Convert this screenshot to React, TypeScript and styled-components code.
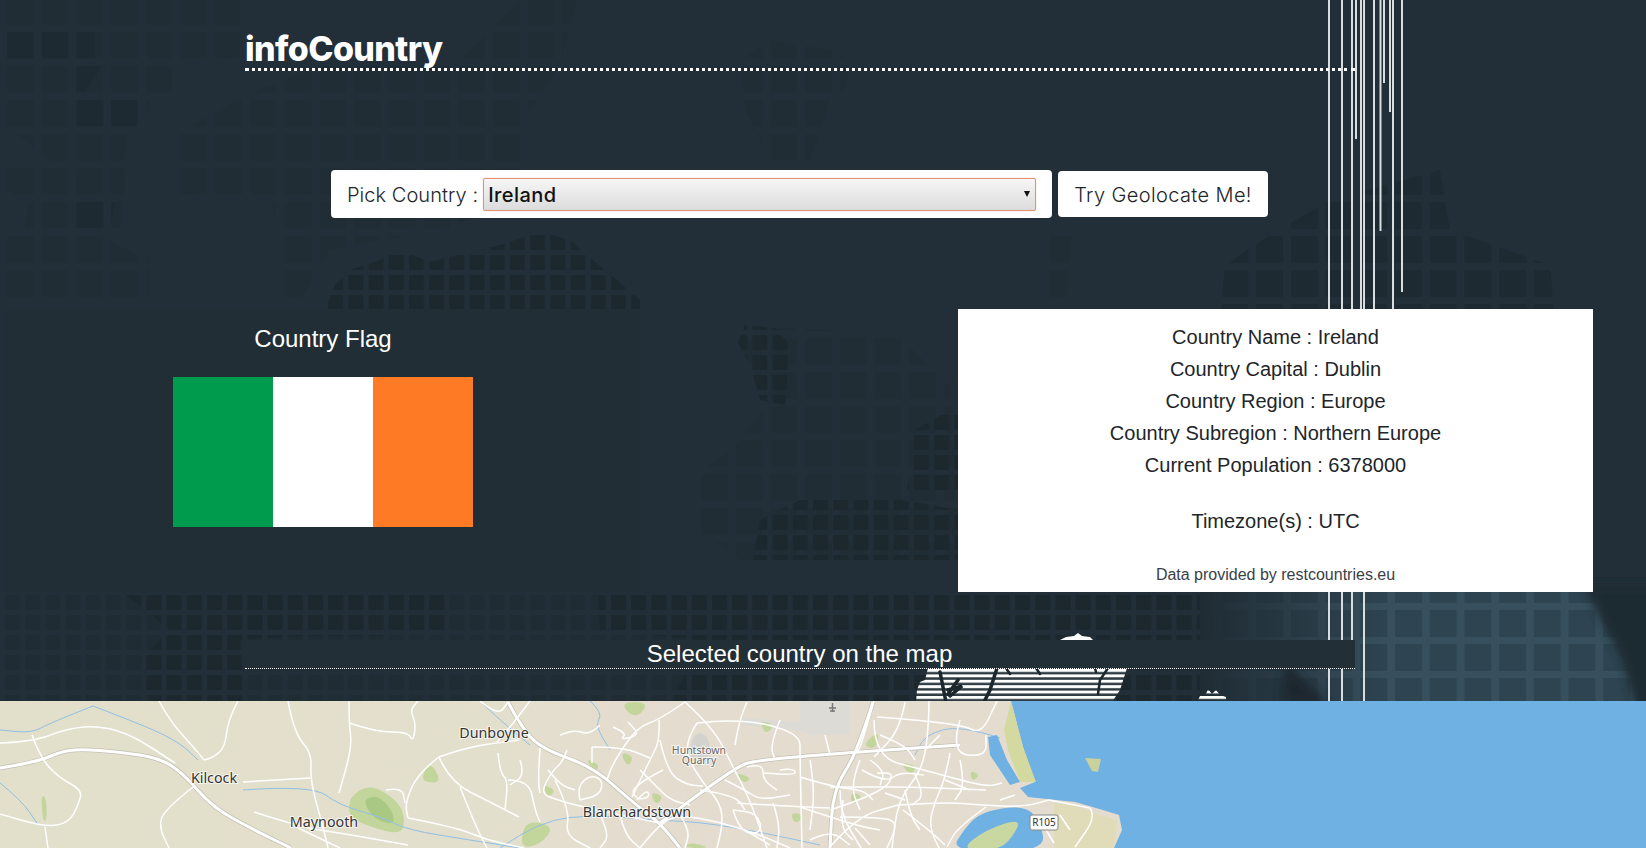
import React from "react";
import styled, { createGlobalStyle } from "styled-components";

const Global = createGlobalStyle`
  html, body { margin: 0; padding: 0; background: #222f38; }
  * { box-sizing: border-box; }
`;

const Page = styled.div`
  position: relative;
  width: 100%;
  height: 848px;
  overflow: hidden;
  background: #222f38;
  font-family: "Liberation Sans", Arial, sans-serif;
`;
const Backdrop = styled.svg`
  position: absolute;
  top: 0;
  left: 0;
  width: 1646px;
  height: 702px;
`;
const Content = styled.main`
  position: relative;
  display: flex;
  flex-direction: column;
`;
const Header = styled.header`
  margin-left: 245px;
  width: 1110px;
  height: 71px;
  padding-top: 27px;
  border-bottom: 3px dotted #fff;
`;
const Title = styled.h1`
  margin: 0;
  font-family: Inter, "Open Sans", sans-serif;
  font-weight: 800;
  font-size: 34px;
  line-height: 44px;
  letter-spacing: -0.6px;
  color: #fff;
`;
const PickerRow = styled.section`
  margin: 99px 0 0 245px;
  padding-left: 86px;
  width: 1110px;
  display: flex;
  align-items: center;
  gap: 6px;
`;
const PickerCard = styled.div`
  width: 721px;
  height: 48px;
  padding: 8px 16px;
  display: flex;
  align-items: center;
  gap: 5px;
  background: #fff;
  border-radius: 4px;
`;
const PickerLabel = styled.label`
  padding-top: 2px;
  font-family: Inter, "Open Sans", sans-serif;
  font-weight: 300;
  font-size: 20px;
  letter-spacing: 0.05px;
  color: #212529;
  white-space: nowrap;
`;
const SelectBox = styled.div`
  position: relative;
  flex: 1;
  height: 33px;
  &::after {
    content: "";
    position: absolute;
    top: 13px;
    right: 6px;
    border-left: 3.5px solid transparent;
    border-right: 3.5px solid transparent;
    border-top: 6px solid #111;
    pointer-events: none;
  }
`;
const CountrySelect = styled.select`
  appearance: none;
  display: block;
  width: 100%;
  height: 33px;
  padding: 1px 0 0 4px;
  font-family: Inter, "Open Sans", sans-serif;
  font-weight: 500;
  font-size: 20px;
  letter-spacing: 0.45px;
  color: #111;
  border: 1px solid #e58f76;
  border-radius: 2px;
  box-shadow: 0 0 1px #e58f76;
  background: linear-gradient(#f6f6f6, #dcdcdc);
`;
const GeoButton = styled.button`
  width: 210px;
  height: 46px;
  padding: 1px 0 0;
  font-family: Inter, "Open Sans", sans-serif;
  font-weight: 300;
  font-size: 20px;
  letter-spacing: 0.38px;
  color: #212529;
  background: #fff;
  border: none;
  border-radius: 4px;
`;
const InfoRow = styled.section`
  margin-top: 91px;
  height: 283px;
  padding: 0 53px 0 5px;
  display: flex;
  justify-content: space-between;
`;
const FlagPanel = styled.div`
  width: 636px;
  padding-top: 15px;
  display: flex;
  flex-direction: column;
  align-items: center;
  background: #212e35;
`;
const FlagTitle = styled.h2`
  margin: 0 0 24px;
  font-weight: 400;
  font-size: 24px;
  line-height: 29px;
  color: #fff;
`;
const Flag = styled.svg`
  display: block;
  width: 300px;
  height: 150px;
`;
const DetailsPanel = styled.div`
  width: 635px;
  padding-top: 12px;
  background: #fff;
  text-align: center;
  color: #212529;
`;
const DetailLine = styled.p<{ $gap?: number }>`
  margin: ${(p) => p.$gap ?? 0}px 0 0;
  font-size: 20px;
  line-height: 32px;
`;
const Credit = styled.p`
  margin: 26px 0 0;
  font-size: 16px;
  line-height: 24px;
  color: #3a4046;
`;
const MapHeading = styled.h2`
  margin: 48px 0 0 245px;
  width: 1110px;
  height: 29px;
  padding-right: 1px;
  font-weight: 400;
  font-size: 24px;
  line-height: 28px;
  text-align: center;
  color: #fff;
  background: #222f36;
  border-bottom: 1px dotted #fff;
`;
const MapFrame = styled.svg`
  display: block;
  margin-top: 32px;
  width: 1646px;
  height: 147px;
`;
const Town = styled.text<{ $size?: number; $ink?: string }>`
  font-family: "Noto Sans", "Open Sans", sans-serif;
  font-size: ${(p) => p.$size ?? 14.3}px;
  fill: ${(p) => p.$ink ?? "#333"};
  stroke: rgba(255, 255, 255, 0.75);
  stroke-width: 2px;
  paint-order: stroke;
  text-anchor: middle;
`;

const faintLand = [
  "5,0 240,0 240,58 200,60 172,62 172,92 152,98 137,126 126,133 125,195 60,195 50,160 5,126",
  "5,167 125,167 120,228 25,228 28,202 5,190",
  "5,235 100,235 150,262 150,297 5,297",
  "178,133 240,98 330,60 460,60 520,0 577,0 560,65 520,125 530,195 450,228 330,250 300,300 283,300 283,240 270,200 180,194",
  "738,343 773,327 897,333 950,387 958,520 960,560 740,560 700,533 700,473 740,440 770,400",
  "1050,235 1072,235 1066,300 1050,300",
  "741,60 770,40 830,50 850,60 846,87 830,100 810,160 770,160 745,110",
];
const darkerLand = [
  "7,32 95,32 95,58 7,58",
  "74,65 101,65 85,92 74,92",
  "74,98 137,98 137,126 74,126",
  "74,202 115,202 110,228 74,228",
  "1220,310 1225,265 1270,235 1330,200 1440,170 1450,230 1550,265 1554,310",
];
const darkBand = [
  "325,310 335,285 350,270 375,262 400,250 430,262 500,245 540,232 570,240 640,300 640,310",
  "738,343 745,325 775,328 790,345 785,405 760,400 750,365",
  "907,490 915,430 950,410 960,415 960,490",
  "753,560 760,520 800,500 900,500 960,510 960,560",
  "122,592 445,592 445,630 380,636 300,636 240,640 243,702 150,702 140,660 170,630",
  "598,592 830,592 1230,592 1240,702 672,702 700,640 600,630",
];
const whiteLines: [number, number][] = [
  [1329, 702], [1342, 702], [1352, 640], [1356, 139], [1361, 320], [1364, 702],
  [1374, 320], [1380.5, 231], [1384, 83], [1390, 112], [1393, 320], [1402, 292],
];

const Background = () => (
  <Backdrop viewBox="0 0 1646 702" aria-hidden="true">
    <defs>
      <pattern id="wideCells" patternUnits="userSpaceOnUse" x="7" y="-2" width="34.7" height="34">
        <rect width="27" height="27" rx="1" fill="#202d35" />
      </pattern>
      <pattern id="wideDark" patternUnits="userSpaceOnUse" x="7" y="-2" width="34.7" height="34">
        <rect width="27" height="27" rx="1" fill="#1e2a32" />
      </pattern>
      <pattern id="smallCells" patternUnits="userSpaceOnUse" x="5" y="595" width="20.2" height="20">
        <rect width="15" height="15" rx="1" fill="#1f2c34" />
      </pattern>
      <pattern id="smallDark" patternUnits="userSpaceOnUse" x="5" y="595" width="20.2" height="20">
        <rect width="15" height="15" rx="1" fill="#1c272e" />
      </pattern>
      <pattern id="glowCells" patternUnits="userSpaceOnUse" x="7" y="-2" width="34.7" height="34">
        <rect width="27" height="27" fill="#2e4451" />
      </pattern>
      <pattern id="stripes" patternUnits="userSpaceOnUse" x="0" y="669" width="8" height="5.4">
        <rect width="8" height="2.9" fill="#fff" />
      </pattern>
      <linearGradient id="glowFade" x1="0" x2="1" y1="0" y2="0">
        <stop offset="0" stopColor="#1f2c34" stopOpacity="1" />
        <stop offset="1" stopColor="#1f2c34" stopOpacity="0" />
      </linearGradient>
      <filter id="soft" x="-20%" y="-20%" width="140%" height="140%">
        <feGaussianBlur stdDeviation="5" />
      </filter>
    </defs>
    <rect width="1646" height="702" fill="#222f38" />
    {faintLand.map((p) => <polygon key={p} points={p} fill="url(#wideCells)" />)}
    {darkerLand.map((p) => <polygon key={p} points={p} fill="url(#wideDark)" />)}
    <rect x="0" y="592" width="1300" height="110" fill="url(#smallCells)" />
    {darkBand.map((p) => <polygon key={p} points={p} fill="url(#smallDark)" />)}
    <rect x="1200" y="592" width="446" height="110" fill="#38505e" />
    <rect x="1200" y="592" width="446" height="110" fill="url(#glowCells)" />
    <rect x="1200" y="592" width="190" height="110" fill="url(#glowFade)" />
    <polygon points="1280,702 1285,662 1330,705" fill="#1c272e" filter="url(#soft)" />
    <polygon points="1583,585 1660,585 1660,710 1636,710 1622,660" fill="#1e2a31" filter="url(#soft)" />
    <polygon points="1060,640 1066,637 1074,636 1078,633 1082,636 1090,637 1093,640" fill="#fff" />
    <polygon points="928,668 1127,668 1120,690 1112,702 916,702 917,690 920,682 925,680" fill="#2f3b42" />
    <polygon points="928,668 1127,668 1120,690 1112,702 916,702 917,690 920,682 925,680" fill="url(#stripes)" />
    <g fill="none" stroke="#1b262d" strokeLinecap="round">
      <path d="M940 672L946 702M948 690L962 686L950 696M958 680L948 694M997 668L990 690L984 702" strokeWidth="3.5" />
      <path d="M1108 668L1100 680L1098 694M1036 668L1040 674M1006 668L1010 674M1095 668L1096 672" strokeWidth="2.5" />
    </g>
    <polygon points="1197,702 1200,696 1206,694 1208,689 1212,694 1216,690 1220,695 1226,697 1226,702" fill="url(#stripes)" />
    <g stroke="#d8dde0" strokeWidth="2">
      {whiteLines.map(([x, end]) => <line key={x} x1={x} x2={x} y1="0" y2={end} />)}
    </g>
  </Backdrop>
);

const smooth = (list: string, close = false) => {
  const pts = list.split(" ").map((p) => p.split(",").map(Number));
  if (close) {
    const mid = (a: number[], b: number[]) => [(a[0] + b[0]) / 2, (a[1] + b[1]) / 2];
    const start = mid(pts[pts.length - 1], pts[0]);
    let d = `M${start[0]} ${start[1]}`;
    pts.forEach((p, i) => {
      const m = mid(p, pts[(i + 1) % pts.length]);
      d += `Q${p[0]} ${p[1]} ${m[0]} ${m[1]}`;
    });
    return d + "Z";
  }
  let d = `M${pts[0][0]} ${pts[0][1]}`;
  for (let i = 1; i < pts.length - 1; i++) {
    const mx = (pts[i][0] + pts[i + 1][0]) / 2;
    const my = (pts[i][1] + pts[i + 1][1]) / 2;
    d += `Q${pts[i][0]} ${pts[i][1]} ${mx} ${my}`;
  }
  const last = pts[pts.length - 1];
  return d + `L${last[0]} ${last[1]}`;
};

const motorways = [
  "0,768 37,762 60,752 79,749 120,752 159,758 183,773 212,807 254,830 291,848",
  "508,702 520,725 540,748 593,767 630,800 660,823 680,848",
  "660,823 733,768 757,760 857,752 960,745",
  "873,702 857,753 833,790 830,848",
];
const roads = [
  "0,743 32,742 69,728 100,726 132,735 175,763",
  "32,735 40,757 58,777 82,790 79,803 69,823 45,827 0,814",
  "45,827 48,848", "159,701 169,720 196,750 204,760",
  "238,701 228,720 225,747 214,757 204,760",
  "288,701 294,733 312,753 310,780 323,827 328,848",
  "243,782 275,780 310,778", "349,701 349,723 352,747 339,793",
  "349,723 376,732 408,732 413,742 416,723 410,710 418,701",
  "193,787 164,810 159,827 169,848", "386,790 402,787 405,803",
  "439,757 418,773 405,803 408,818", "439,757 466,747 519,740",
  "439,757 450,782 492,803 519,817", "460,787 476,827 487,848",
  "408,818 455,827 487,840 524,848", "508,780 529,780 535,810 540,822",
  "498,753 500,773 508,780 505,810", "480,701 498,716 508,702", "530,701 512,725 497,742",
  "296,827 340,848", "254,812 300,827 340,833 408,845",
  "685,702 713,727 733,767 750,800 767,848",
  "697,723 688,737 687,757 703,783 720,803 723,823 717,848",
  "697,723 740,718 800,733 800,757 802,848", "747,702 740,718 735,745",
  "659,720 660,740 650,760 632,797", "685,702 659,720 637,727 613,763 607,780",
  "660,740 667,772 687,785 703,786", "592,747 623,747 650,758", "592,747 592,763",
  "567,750 562,763 553,770 540,793 557,800 583,807 620,815 660,823",
  "580,800 577,787 590,775 603,780 600,795 580,800", "540,748 538,780 540,793",
  "613,727 627,733 620,740 640,735 628,722", "663,770 630,787 637,800 650,797 647,790 637,800",
  "737,803 800,807 830,808", "747,767 763,763 763,780 777,790", "780,770 793,768 797,775 763,773",
  "733,810 740,833 763,833 757,813 733,810", "773,803 780,823 777,848",
  "800,777 833,787 863,790 873,800", "800,807 830,817 863,827 880,830",
  "843,800 840,827 853,840", "640,848 660,823 680,815 720,822 760,835 790,848",
  "874,701 861,747 856,753", "877,717 960,723 981,735 997,701",
  "874,720 874,757 924,770 986,787 1002,783", "929,701 929,720 924,767 898,800 892,848",
  "960,720 950,753 986,757 986,735", "950,753 945,780 934,803 929,827 939,848",
  "830,787 872,787 913,787 986,790", "898,805 945,802 981,805 1023,807 1049,800",
  "830,810 882,793 895,773 877,773", "830,847 856,817 898,805",
  "840,817 882,817 898,823 887,848", "903,810 929,830 945,845", "840,790 840,813 861,848",
  "986,807 958,827 947,847", "1038,817 1054,843", "1090,808 1096,817 1075,847",
  "1049,800 1075,805 1090,808", "905,702 900,730 874,757", "862,770 885,783 900,772 924,775",
  "548,770 560,785 575,790", "555,780 570,810 565,835 590,848", "600,815 610,835 600,848",
  "620,815 625,835 640,848", "680,815 690,830 685,848", "700,790 735,795 745,810",
  "780,720 770,745 775,760", "810,760 815,790 810,830", "825,735 830,755", "860,760 850,785 860,810",
  "880,735 905,745 915,760", "905,790 910,815 920,830", "940,735 925,750", "960,760 965,785 955,800",
  "855,828 870,845", "885,793 905,800", "870,760 885,770 880,785", "915,775 925,795 912,805",
  "945,780 970,790", "600,725 590,735 575,730 560,735", "520,760 525,775 510,785",
  "640,770 655,785 670,800 690,805", "725,780 745,790 760,800 790,795",
  "745,830 770,845", "810,840 830,830 850,845", "1060,815 1070,830", "1000,800 1015,795",
];
const rivers = [
  "93,706 50,723 32,733 0,730", "93,706 148,727 180,743 198,760", "0,783 21,800 37,823",
  "243,790 312,785 339,805 381,817 408,830 470,840 520,848", "590,701 603,713 595,725 610,750",
  "500,848 540,820 600,815 650,820 700,822 760,832 820,845",
  "1000,738 960,725 925,735 915,755", "480,701 495,716 530,745",
];
const greens = [
  "349,797 370,784 397,800 405,817 402,835 370,827 349,817",
  "423,773 431,762 442,783 423,782", "41,795 46,797 47,820 43,822",
  "622,702 648,702 640,716 628,714", "620,752 634,756 628,768", "585,758 600,765 595,772",
  "525,820 555,826 540,845 520,848", "650,792 664,796 656,806", "735,772 752,778 744,784",
  "862,745 880,730 876,750", "690,842 712,848 684,848",
  "900,762 918,766 910,776", "850,792 864,796 852,806", "542,784 556,790 548,798",
  "790,812 805,815 795,825", "970,770 980,775 972,782", "760,720 775,725 765,735",
];

const MapView = () => (
  <MapFrame viewBox="0 701 1646 147" aria-label="Map of Dublin and the Irish Sea">
    <defs>
      <linearGradient id="land" x1="0" x2="1" y1="0" y2="0">
        <stop offset="0" stopColor="#e2dfca" />
        <stop offset="0.45" stopColor="#e3dfcd" />
        <stop offset="0.62" stopColor="#e5dcd0" />
      </linearGradient>
    </defs>
    <rect x="0" y="701" width="1646" height="147" fill="#6fb1e3" />
    <polygon
      points="0,701 1011,701 1023,747 1035,782 1020,788 1028,797 1075,802 1096,808 1119,815 1122,830 1114,848 0,848"
      fill="url(#land)"
    />
    <polygon points="1011,701 1023,747 1036,782 1020,782 1008,750 1004,730" fill="#d3d99f" />
    <polygon points="1054,803 1075,805 1100,815 1118,820 1114,848 1054,848" fill="#e0dcba" />
    <polygon points="800,701 850,701 850,735 810,735 800,731 743,725 743,718 800,722" fill="#dddbd6" />
    <path d={smooth("692,735 705,732 712,750 700,770 690,760", true)} fill="#d4d2cc" />
    {greens.map((p) => <path key={p} d={smooth(p, true)} fill="#c2d69b" />)}
    <path d={smooth("362,800 378,795 392,810 395,825 375,820", true)} fill="#a9c883" />
    <g fill="none" stroke="#8fc0e6" strokeWidth="1">
      {rivers.map((p) => <path key={p} d={smooth(p)} />)}
    </g>
    <g fill="none" stroke="#c4c0b4" strokeWidth="4.5">
      {motorways.map((p) => <path key={p} d={smooth(p)} />)}
    </g>
    <g fill="none" stroke="#fff" strokeWidth="3">
      {motorways.map((p) => <path key={p} d={smooth(p)} />)}
    </g>
    <g fill="none" stroke="#fff" strokeWidth="1.5" strokeLinejoin="round">
      {roads.map((p) => <path key={p} d={smooth(p)} />)}
    </g>
    <polygon points="988,737 997,735 1007,760 1020,782 1010,785 1000,770 990,755" fill="#6fb1e3" />
    <path d={smooth("950,852 965,828 981,812 1023,805 1040,820 1046,852", true)} fill="#6fb1e3" />
    <path d={smooth("960,850 985,830 1022,818 1012,838 998,850", true)} fill="#c9d8a0" />
    <polygon points="1085,758 1101,759 1098,772 1092,771" fill="#c9d29c" />
    <path d="M829 708h7M832.500 703v9M830 711h5" stroke="#777" strokeWidth="1.500" fill="none" />
    <Town x="214" y="783">Kilcock</Town>
    <Town x="494" y="738">Dunboyne</Town>
    <Town x="324" y="827">Maynooth</Town>
    <Town x="637" y="817">Blanchardstown</Town>
    <Town x="699" y="754" $size={10.5} $ink="#666">
      Huntstown
      <tspan x="699" dy="10">Quarry</tspan>
    </Town>
    <rect x="1030" y="815" width="28" height="15" rx="2" fill="#fff" stroke="#888" />
    <Town x="1044" y="826" $size={10} $ink="#333">R105</Town>
  </MapFrame>
);

export default function App() {
  return (
    <Page>
      <Global />
      <Background />
      <Content>
        <Header>
          <Title>infoCountry</Title>
        </Header>
        <PickerRow>
          <PickerCard>
            <PickerLabel htmlFor="country">Pick Country :</PickerLabel>
            <SelectBox>
              <CountrySelect id="country" defaultValue="Ireland">
                <option>Ireland</option>
              </CountrySelect>
            </SelectBox>
          </PickerCard>
          <GeoButton>Try Geolocate Me!</GeoButton>
        </PickerRow>
        <InfoRow>
          <FlagPanel>
            <FlagTitle>Country Flag</FlagTitle>
            <Flag viewBox="0 0 3 1.5" aria-label="Flag of Ireland">
              <rect width="1" height="1.5" fill="#009b4d" />
              <rect x="1" width="1" height="1.5" fill="#fff" />
              <rect x="2" width="1" height="1.5" fill="#ff7a25" />
            </Flag>
          </FlagPanel>
          <DetailsPanel>
            <DetailLine>Country Name : Ireland</DetailLine>
            <DetailLine>Country Capital : Dublin</DetailLine>
            <DetailLine>Country Region : Europe</DetailLine>
            <DetailLine>Country Subregion : Northern Europe</DetailLine>
            <DetailLine>Current Population : 6378000</DetailLine>
            <DetailLine $gap={24}>Timezone(s) : UTC</DetailLine>
            <Credit>Data provided by restcountries.eu</Credit>
          </DetailsPanel>
        </InfoRow>
        <MapHeading>Selected country on the map</MapHeading>
        <MapView />
      </Content>
    </Page>
  );
}
